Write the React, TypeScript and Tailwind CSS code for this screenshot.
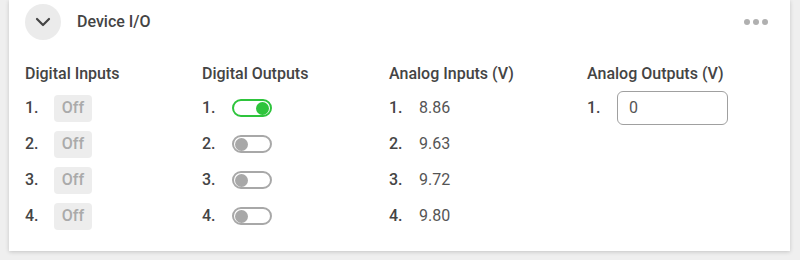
import React from "react";

function Toggle({ on }: { on: boolean }) {
  return (
    <div
      className={
        on
          ? "w-[40px] h-[18px] rounded-full border-2 border-[#2ec43c] flex items-center justify-end px-[1px]"
          : "w-[40px] h-[18px] rounded-full border-2 border-[#a8a8a8] flex items-center justify-start px-[1px]"
      }
    >
      <div
        className={
          on
            ? "w-[13px] h-[13px] rounded-full bg-[#2ec43c]"
            : "w-[13px] h-[13px] rounded-full bg-[#a8a8a8]"
        }
      />
    </div>
  );
}

function Num({ n, w }: { n: number; w: string }) {
  return <span className={`${w} font-medium text-[#444]`}>{n}.</span>;
}

export default function App() {
  const rows = [1, 2, 3, 4];
  const analog = ["8.86", "9.63", "9.72", "9.80"];
  return (
    <div
      className="w-[800px] h-[260px] bg-[#efefef] pl-[9px] pr-[10px] pb-[9px] overflow-hidden"
      style={{ fontFamily: "Roboto, 'Noto Sans', sans-serif" }}
    >
      <div className="h-full bg-white shadow-[0_1px_4px_rgba(0,0,0,0.18)] pl-[16px] pr-[22px] pt-[4px]">
        <div className="flex items-center h-[36px]">
          <div className="w-[36px] h-[36px] rounded-full bg-[#ebebeb] flex items-center justify-center">
            <svg width="16" height="10" viewBox="0 0 16 10" fill="none">
              <path d="M2 2l6 6 6-6" stroke="#444" strokeWidth="2.2" strokeLinecap="round" strokeLinejoin="round" />
            </svg>
          </div>
          <div className="ml-[16px] text-[16px] font-medium text-[#444]">Device I/O</div>
          <div className="ml-auto flex gap-[3px] items-center">
            <div className="w-[6px] h-[6px] rounded-full bg-[#b0b0b0]" />
            <div className="w-[6px] h-[6px] rounded-full bg-[#b0b0b0]" />
            <div className="w-[6px] h-[6px] rounded-full bg-[#b0b0b0]" />
          </div>
        </div>

        <div className="flex mt-[22px] text-[16px] leading-[24px] text-[#444]">
          <div className="w-[177px] flex flex-col">
            <div className="font-medium h-[24px]">Digital Inputs</div>
            <div className="mt-[4px]">
              {rows.map((n) => (
                <div key={n} className="flex items-center h-[36px]">
                  <Num n={n} w="w-[29px]" />
                  <div className="w-[38px] h-[27px] rounded-[4px] bg-[#ededed] flex items-center justify-center text-[#aaa] font-medium">
                    Off
                  </div>
                </div>
              ))}
            </div>
          </div>

          <div className="w-[187px] flex flex-col">
            <div className="font-medium h-[24px]">Digital Outputs</div>
            <div className="mt-[4px]">
              {rows.map((n) => (
                <div key={n} className="flex items-center h-[36px]">
                  <Num n={n} w="w-[30px]" />
                  <Toggle on={n === 1} />
                </div>
              ))}
            </div>
          </div>

          <div className="w-[198px] flex flex-col">
            <div className="font-medium h-[24px]">Analog Inputs (V)</div>
            <div className="mt-[4px]">
              {rows.map((n, i) => (
                <div key={n} className="flex items-center h-[36px]">
                  <Num n={n} w="w-[30px]" />
                  <span className="text-[#555]">{analog[i]}</span>
                </div>
              ))}
            </div>
          </div>

          <div className="flex flex-col">
            <div className="font-medium h-[24px]">Analog Outputs (V)</div>
            <div className="mt-[4px]">
              <div className="flex items-center h-[36px]">
                <Num n={1} w="w-[30px]" />
                <div className="w-[111px] h-[34px] rounded-[6px] border border-[#a0a0a0] flex items-center px-[11px] text-[#555]">
                  0
                </div>
              </div>
            </div>
          </div>
        </div>
      </div>
    </div>
  );
}
